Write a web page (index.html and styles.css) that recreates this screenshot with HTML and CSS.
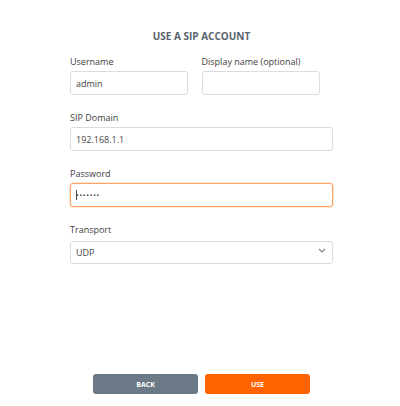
FILE: index.html
```html
<!DOCTYPE html>
<html lang="en">

<head>
    <meta charset="UTF-8">
    <meta name="viewport" content="width=device-width, initial-scale=1.0">
    <title>Use a SIP account</title>
    <link rel="stylesheet" href="styles.css">
</head>

<body>
    <div class="page">
        <h1 class="title">USE A SIP ACCOUNT</h1>

        <form class="form">
            <div class="row">
                <div class="field half">
                    <label for="username">Username</label>
                    <input id="username" class="input" type="text" value="admin">
                </div>
                <div class="field half">
                    <label for="display">Display name (optional)</label>
                    <input id="display" class="input" type="text">
                </div>
            </div>

            <div class="field">
                <label for="domain">SIP Domain</label>
                <input id="domain" class="input" type="text" value="192.168.1.1">
            </div>

            <div class="field">
                <label for="password">Password</label>
                <div class="input focused">
                    <span class="caret"></span>
                    <span class="dots">&bull;&bull;&bull;&bull;&bull;&bull;&bull;</span>
                </div>
            </div>

            <div class="field">
                <label for="transport">Transport</label>
                <div class="select-wrap">
                    <select id="transport" class="input select">
                        <option>UDP</option>
                        <option>TCP</option>
                        <option>TLS</option>
                    </select>
                    <svg class="chevron" width="8" height="5" viewBox="0 0 8 5">
                        <path d="M1 1l3 3 3-3" fill="none" stroke="#7a8590" stroke-width="1.2" />
                    </svg>
                </div>
            </div>
        </form>

        <div class="actions">
            <button class="btn back" type="button">BACK</button>
            <button class="btn use" type="button">USE</button>
        </div>
    </div>
</body>

</html>
```

FILE: styles.css
```css
* {
    margin: 0;
    padding: 0;
    box-sizing: border-box;
}

body {
    background-color: #fff;
    color: #3d3d3d;
    font-family: "Open Sans", "Noto Sans", sans-serif;
}

.page {
    min-height: 100vh;
    display: flex;
    flex-direction: column;
    padding: 30px 67px 12px 70px;
}

.title {
    font-size: 10px;
    line-height: 12px;
    font-weight: 700;
    color: #59636d;
    text-align: center;
    margin-bottom: 14px;
}

.row {
    display: flex;
    justify-content: space-between;
}

.field {
    display: flex;
    flex-direction: column;
    margin-bottom: 17px;
}

.field.half {
    width: 45%;
}

.field.half + .field.half {
    margin-right: 5%;
}

label {
    font-size: 9px;
    line-height: 12px;
    color: #3d3d3d;
    margin-bottom: 3px;
}

.input {
    height: 24px;
    width: 100%;
    border: 1px solid #dcdcdc;
    border-radius: 3px;
    background: #fff;
    padding: 0 5px;
    font-family: inherit;
    font-size: 9px;
    color: #444;
    outline: none;
}

.input.focused {
    display: flex;
    align-items: center;
    border-color: #ffa365;
    box-shadow: 0 0 0 1px rgba(255, 163, 101, 0.25);
}

.caret {
    width: 1px;
    height: 10px;
    background: #444;
    margin-right: -1px;
}

.dots {
    font-size: 7px;
    letter-spacing: 0.8px;
    color: #444;
}

.select-wrap {
    position: relative;
}

.select {
    height: 23px;
    appearance: none;
    -webkit-appearance: none;
}

.chevron {
    position: absolute;
    right: 7px;
    top: 9px;
}

.actions {
    margin-top: auto;
    display: flex;
    justify-content: center;
    gap: 7px;
}

.btn {
    width: 105px;
    height: 20px;
    border: none;
    border-radius: 3px;
    color: #fff;
    font-family: inherit;
    font-size: 7px;
    font-weight: 700;
    cursor: pointer;
}

.btn.back {
    background-color: #6c7a87;
}

.btn.use {
    background-color: #ff6300;
}
```
